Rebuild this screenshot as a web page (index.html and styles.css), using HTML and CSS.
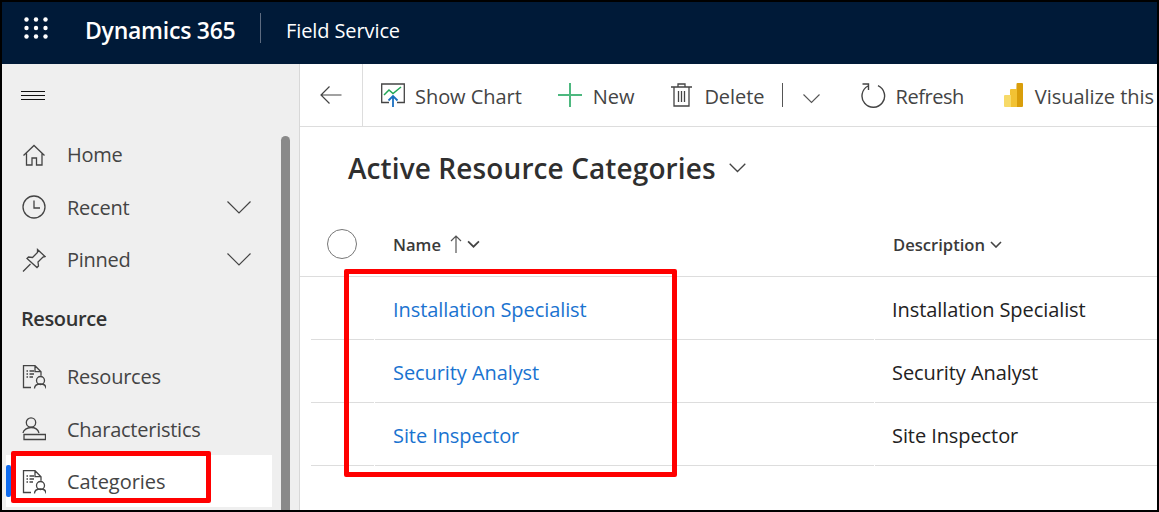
FILE: index.html
```html
<!doctype html>
<html lang="en-US">
  <head>
    <title>Active Resource Categories</title>
    <meta charset="UTF-8">
    <link rel="stylesheet" href="styles.css">
  </head>
  <body>
<div class="frame">
  <header class="topbar">
    <svg class="waffle" width="24" height="22" viewBox="0 0 24 22" fill="#fff">
      <circle cx="2.500" cy="2.500" r="2.200"/><circle cx="12" cy="2.500" r="2.200"/><circle cx="21.500" cy="2.500" r="2.200"/>
      <circle cx="2.500" cy="11" r="2.200"/><circle cx="12" cy="11" r="2.200"/><circle cx="21.500" cy="11" r="2.200"/>
      <circle cx="2.500" cy="19.500" r="2.200"/><circle cx="12" cy="19.500" r="2.200"/><circle cx="21.500" cy="19.500" r="2.200"/>
    </svg>
    <span class="brand">Dynamics 365</span>
    <i class="brand-rule"></i>
    <span class="app">Field Service</span>
  </header>
  <div class="columns">
    <nav class="sidebar">
      <div class="burger"><span></span><span></span><span></span></div>
      <a class="item">
        <svg class="icon" viewBox="0 0 24 24"><path d="M1.500 12.500 12 2.500l10.500 10M4.500 10.500V22H10v-7h4.500v7H20V10.500"/></svg>
        <span>Home</span>
      </a>
      <a class="item">
        <svg class="icon" viewBox="0 0 24 24"><circle cx="12" cy="12" r="11"/><path d="M12 5.500V13h6"/></svg>
        <span>Recent</span>
        <svg class="chev" viewBox="0 0 24 13"><path d="M.5.500 12 12 23.500.500"/></svg>
      </a>
      <a class="item">
        <svg class="icon" viewBox="0 0 24 24"><path d="M1 23.500 8.500 16M15.500 1.500l7.500 7-2 .5-5 5 .5 4-1.500 1.500L5 10.500 6.500 9l4 .5 5-5z"/></svg>
        <span>Pinned</span>
        <svg class="chev" viewBox="0 0 24 13"><path d="M.5.500 12 12 23.500.500"/></svg>
      </a>
      <h3 class="group">Resource</h3>
      <a class="item">
        <svg class="icon" viewBox="0 0 24 24"><path d="M9 22.500H1.500V.7H13l6 6v4M13 .7v6h6M4.500 6h1.500M7.500 6H12M4.500 9h1.500M7.500 9H12M4.500 12h1.500M7.500 12H11"/><circle cx="18.500" cy="15.500" r="4"/><path d="M12.500 23.500c0-3.500 2.500-4.500 6-4.500s5.500 1 5.500 4.500"/></svg>
        <span>Resources</span>
      </a>
      <a class="item">
        <svg class="icon" viewBox="0 0 24 24"><circle cx="9" cy="5.500" r="4.700"/><path d="M1 16c.5-3 4-5.500 8-5.500s7 2 8 5.500M2 17.500h21.500v5H2z"/></svg>
        <span>Characteristics</span>
      </a>
      <a class="item current">
        <svg class="icon" viewBox="0 0 24 24"><path d="M9 22.500H1.500V.7H13l6 6v4M13 .7v6h6M4.500 6h1.500M7.500 6H12M4.500 9h1.500M7.500 9H12M4.500 12h1.500M7.500 12H11"/><circle cx="18.500" cy="15.500" r="4"/><path d="M12.500 23.500c0-3.500 2.500-4.500 6-4.500s5.500 1 5.500 4.500"/></svg>
        <span>Categories</span>
      </a>
      <div class="scrollbar"></div>
    </nav>
    <main class="content">
      <div class="toolbar">
        <div class="back">
          <svg width="22" height="18" viewBox="0 0 22 18" fill="none" stroke="#444" stroke-width="1.200"><path d="M21.500 9H1M9.500.500 1 9l8.500 8.500"/></svg>
        </div>
        <div class="tool chart">
          <svg width="24" height="24" viewBox="0 0 24 24" fill="none"><path d="M8 19.500H.7V1h22.600v18.500H16" stroke="#444" stroke-width="1.300"/><path d="m3 12 5-5 4 3.500L20 4" stroke="#21a656" stroke-width="1.500"/><path d="M12 24V13M7.500 17.500 12 13l4.500 4.500" stroke="#1a6fc0" stroke-width="1.800"/></svg>
          <span>Show Chart</span>
        </div>
        <div class="tool new">
          <svg width="24" height="24" viewBox="0 0 24 24" stroke="#4db87f" stroke-width="2"><path d="M12 0v24M0 12h24"/></svg>
          <span>New</span>
        </div>
        <div class="tool del">
          <svg width="21" height="24" viewBox="0 0 21 24" fill="none" stroke="#444" stroke-width="1.300"><path d="M0 4h21M7 4V1h7v3M3 4v19h15V4M7.500 8v11M10.500 8v11M13.500 8v11"/></svg>
          <span>Delete</span>
          <i class="split"></i>
          <svg class="more" width="17" height="10" viewBox="0 0 17 10" fill="none" stroke="#555" stroke-width="1.100"><path d="m.5.500 8 8 8-8"/></svg>
        </div>
        <div class="tool refresh">
          <svg width="25" height="25" viewBox="0 0 25 25" fill="none" stroke="#444" stroke-width="1.400"><path d="M17 2.700a11.300 11.300 0 1 1-10 .3M1.500 1H7.500V7"/></svg>
          <span>Refresh</span>
        </div>
        <div class="tool pbi">
          <svg width="19" height="24" viewBox="0 0 19 24"><path d="M12.500 1a1 1 0 0 1 1-1H18a1 1 0 0 1 1 1v22a1 1 0 0 1-1 1h-6z" fill="#d99e0b"/><path d="M6 7a1 1 0 0 1 1-1h6v18H6z" fill="#f2c233"/><path d="M0 13a1 1 0 0 1 1-1h6v12H1a1 1 0 0 1-1-1z" fill="#f7da68"/></svg>
          <span>Visualize this</span>
        </div>
      </div>
      <div class="title">
        <h1>Active Resource Categories</h1>
        <svg width="17" height="10" viewBox="0 0 17 10" fill="none" stroke="#444" stroke-width="1.300"><path d="m.7.700 7.800 7.800L16.300.7"/></svg>
      </div>
      <div class="thead">
        <span class="check"></span>
        <span class="th name">Name
          <svg class="up" width="12" height="18" viewBox="0 0 12 18" fill="none" stroke="#555" stroke-width="1.200"><path d="M6 18V1M1 6l5-5 5 5"/></svg>
          <svg width="13" height="8" viewBox="0 0 12 7" fill="none" stroke="#444" stroke-width="1.600"><path d="m1 1 5 5 5-5"/></svg>
        </span>
        <span class="th desc">Description
          <svg width="12" height="7" viewBox="0 0 12 7" fill="none" stroke="#444" stroke-width="1.600"><path d="m1 1 5 5 5-5"/></svg>
        </span>
      </div>
      <div class="row"><a>Installation Specialist</a><span>Installation Specialist</span></div>
      <div class="row"><a>Security Analyst</a><span>Security Analyst</span></div>
      <div class="row"><a>Site Inspector</a><span>Site Inspector</span></div>
    </main>
  </div>
  <div class="callout callout-nav"></div>
  <div class="callout callout-rows"></div>
</div>
  </body>
</html>
```

FILE: styles.css
```css
html, body {
  margin: 0;
  height: 100%;
  overflow: hidden;
  font-family: "Open Sans", "Noto Sans", sans-serif;
  background: #fff;
}
.frame {
  position: relative;
  box-sizing: border-box;
  width: 1159px;
  height: 512px;
  border: 2px solid #000;
  display: flex;
  flex-direction: column;
  overflow: hidden;
}
.topbar {
  flex: none;
  box-sizing: border-box;
  height: 62px;
  padding-bottom: 6px;
  background: #001a38;
  color: #fff;
  display: flex;
  align-items: center;
}
.waffle {
  margin: 0 0 5px 22px;
}
.brand {
  margin-left: 37px;
  width: 175px;
  font-size: 23px;
  font-weight: 600;
  letter-spacing: -0.25px;
}
.brand-rule {
  width: 1px;
  height: 30px;
  margin-bottom: 5px;
  background: #5d6b80;
}
.app {
  margin-left: 25px;
  font-size: 20px;
  letter-spacing: -0.1px;
}
.columns {
  flex: 1;
  display: flex;
  min-height: 0;
}

/* left nav */
.sidebar {
  position: relative;
  flex: none;
  width: 297px;
  background: #efefef;
  border-right: 1px solid #d8d8d8;
  color: #444;
}
.burger {
  height: 62px;
  padding-left: 19px;
  display: flex;
  flex-direction: column;
  justify-content: center;
  gap: 3px;
}
.burger span {
  width: 24px;
  height: 1px;
  background: #111;
}
.item {
  display: flex;
  align-items: center;
  height: 52.500px;
  margin-right: 27px;
  padding-left: 20px;
  font-size: 20px;
  letter-spacing: -0.25px;
}
.burger + .item {
  margin-top: 2.300px;
}
.icon {
  width: 24px;
  height: 24px;
  flex: none;
  margin-right: 21px;
  fill: none;
  stroke: #444;
  stroke-width: 1.300;
}
.chev {
  width: 24px;
  height: 13px;
  margin-left: auto;
  margin-right: 21px;
  fill: none;
  stroke: #444;
  stroke-width: 1.200;
}
.group {
  margin: 0;
  height: 64.500px;
  line-height: 66px;
  padding-left: 19px;
  font-size: 20px;
  font-weight: 600;
  letter-spacing: -0.4px;
  color: #333;
}
.current {
  box-sizing: border-box;
  position: relative;
  height: 52px;
  margin: -0.500px 27px 0 4px;
  padding: 2px 0 0 16px;
  background: #fff;
  letter-spacing: -0.05px;
}
.current::before {
  content: "";
  position: absolute;
  left: 0;
  top: 10px;
  width: 5px;
  height: 32px;
  border-radius: 2px;
  background: #0f6cf0;
}
.scrollbar {
  position: absolute;
  top: 72px;
  bottom: 0;
  right: 9px;
  width: 9px;
  border-radius: 5px 5px 0 0;
  background: #8a8a8a;
}

/* main area */
.content {
  flex: 1;
  min-width: 0;
  overflow: hidden;
  color: #333;
}
.toolbar {
  height: 62px;
  border-bottom: 1px solid #ddd;
  display: flex;
  align-items: center;
  white-space: nowrap;
}
.back {
  flex: none;
  width: 63px;
  height: 62px;
  box-sizing: border-box;
  border-right: 1px solid #ddd;
  display: flex;
  align-items: center;
  padding-left: 20px;
}
.tool {
  display: flex;
  align-items: center;
  flex: none;
  font-size: 20px;
  letter-spacing: -0.05px;
  color: #444;
}
.tool > span {
  margin: 2px 0 0 10px;
}
.chart { margin-left: 18px; }
.new { margin-left: 36px; }
.new > span { margin-left: 11px; }
.del { margin-left: 37px; }
.del > span { margin-left: 12px; }
.split {
  width: 1px;
  height: 24px;
  background: #555;
  margin-left: 18px;
}
.more {
  margin: 8px 0 0 20px;
}
.refresh { margin-left: 41px; }
.refresh > span {
  margin-left: 9px;
  letter-spacing: -0.45px;
}
.pbi { margin-left: 40px; }
.pbi > span { margin-left: 12px; }
.title {
  box-sizing: border-box;
  display: flex;
  align-items: center;
  gap: 13px;
  height: 84px;
  padding: 0 0 2px 48px;
}
.title h1 {
  margin: 0;
  font-size: 28px;
  font-weight: 600;
  letter-spacing: 0.1px;
  color: #2f2f2f;
}
.thead {
  display: grid;
  grid-template-columns: 93px 500px 1fr;
  align-items: center;
  height: 65px;
  border-bottom: 1px solid #ddd;
}
.check {
  box-sizing: border-box;
  width: 30px;
  height: 30px;
  margin-left: 27px;
  border: 1px solid #777;
  border-radius: 50%;
}
.th {
  display: flex;
  align-items: center;
  padding-top: 1px;
  font-size: 16.600px;
  font-weight: 600;
  color: #3a3a3a;
  gap: 5px;
}
.up {
  margin-left: 4px;
}
.row {
  display: grid;
  grid-template-columns: 63px 499px 1fr;
  column-gap: 1px;
  height: 63px;
  margin-left: 11px;
  font-size: 20px;
  letter-spacing: -0.08px;
  color: #222;
  white-space: nowrap;
}
.row::before {
  content: "";
  border-bottom: 1px solid #ddd;
}
.row > * {
  display: flex;
  align-items: center;
  padding-top: 2px;
  border-bottom: 1px solid #ddd;
}
.row a {
  padding-left: 18px;
  color: #1a73d0;
}
.row span {
  padding-left: 17px;
}

/* red annotation boxes drawn over the screenshot */
.callout {
  position: absolute;
  box-sizing: border-box;
  border: 5px solid #f00;
  border-radius: 2px;
}
.callout-nav {
  left: 9px;
  top: 449px;
  width: 200px;
  height: 52px;
}
.callout-rows {
  left: 342px;
  top: 267px;
  width: 333px;
  height: 208px;
}
```
